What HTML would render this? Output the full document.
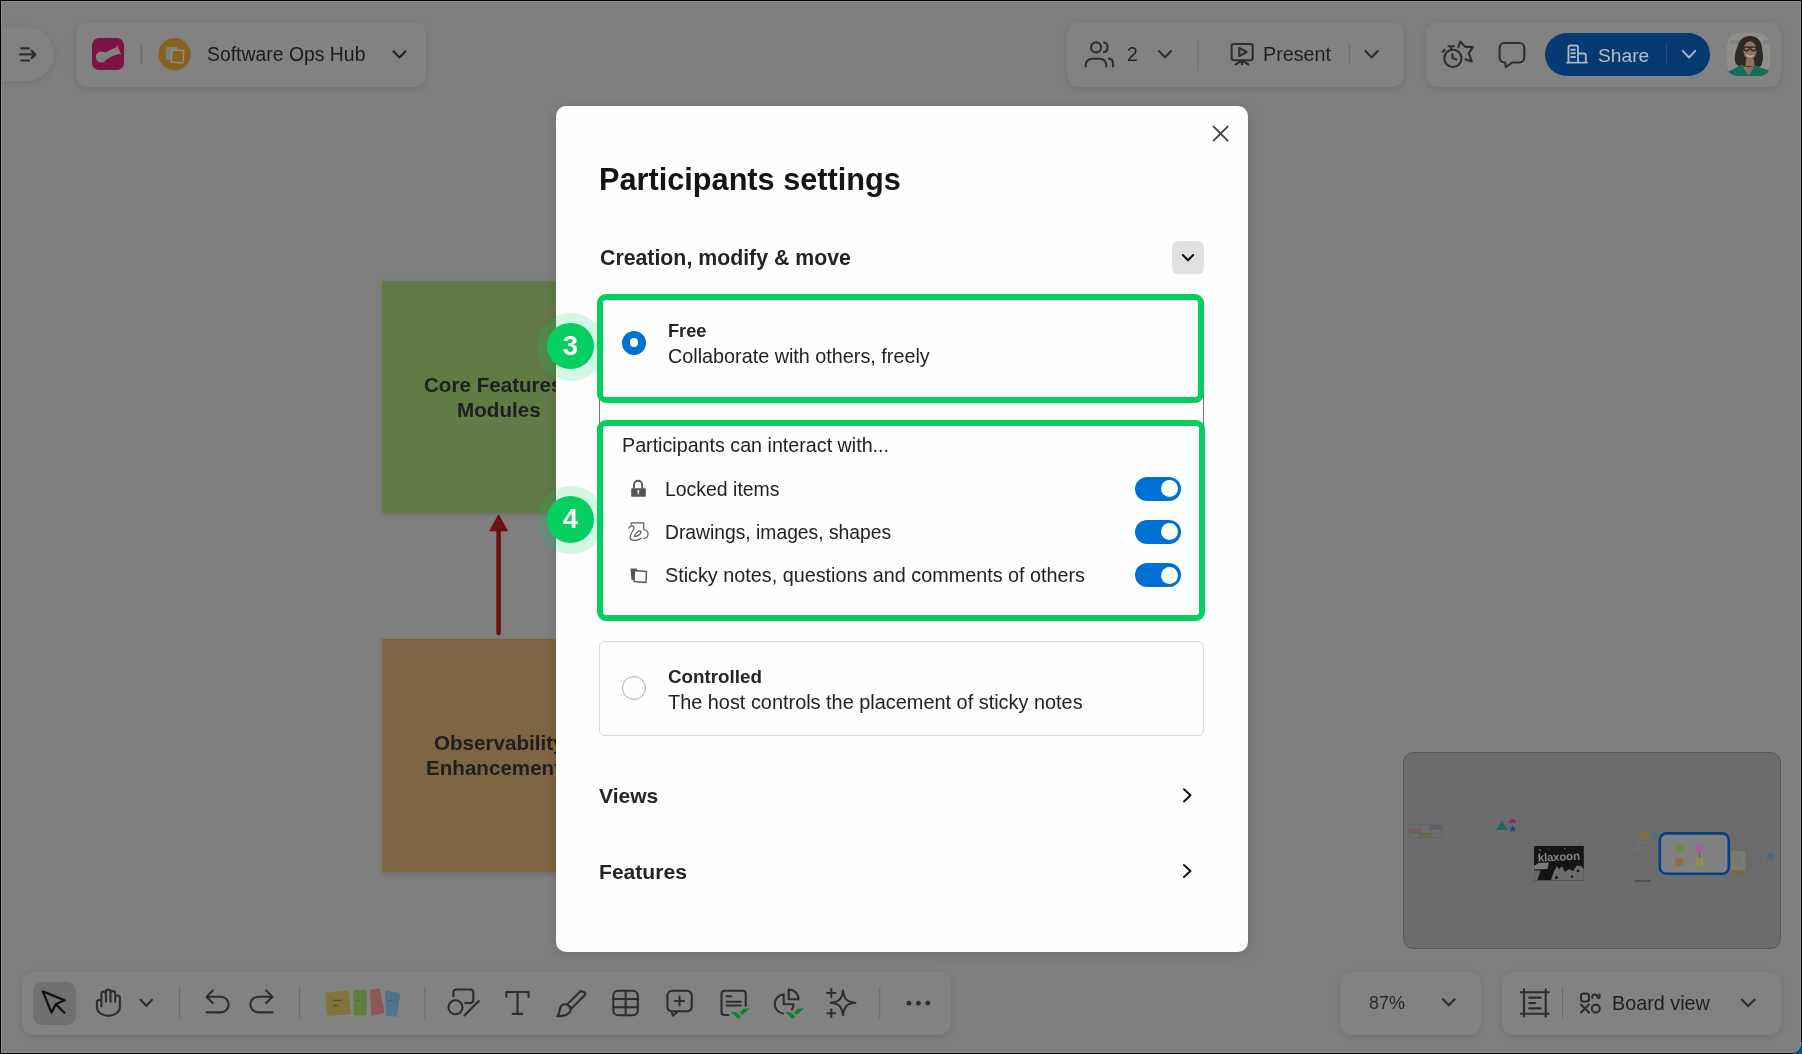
<!DOCTYPE html>
<html><head><meta charset="utf-8">
<style>
*{box-sizing:border-box;margin:0;padding:0}
html,body{width:1802px;height:1054px;overflow:hidden;background:#000}
body{font-family:"Liberation Sans",sans-serif;position:relative;color:#1b1b1b}
.a{position:absolute}
#win{position:absolute;left:1px;top:1px;width:1800px;height:1052px;background:#7f7f7f;border-bottom-right-radius:9px;box-shadow:inset 0 0 0 1px #8c8c8c}
.bar{position:absolute;background:#828282;border-radius:12px;box-shadow:0 1.5px 6px rgba(0,0,0,.11)}
.t{position:absolute;white-space:nowrap;line-height:1;will-change:transform}
svg{position:absolute;overflow:visible;left:0;top:0;will-change:transform}
.ic{fill:none;stroke:#2e2e2e;stroke-width:2.1;stroke-linecap:round;stroke-linejoin:round}
</style></head><body>
<div class="a" style="left:1793px;top:1042px;width:9px;height:12px;background:#0b4f80"></div>
<div id="win"></div>

<!-- BOARD NOTES -->
<div class="a" style="left:382.4px;top:281px;width:233px;height:232px;background:#627a46;box-shadow:0 2px 5px rgba(0,0,0,.13)"></div>
<div class="t" style="left:424.2px;top:375.2px;font-weight:700;font-size:20.6px;color:#1f1f1f">Core Features</div>
<div class="t" style="left:382px;top:400.2px;width:233.7px;text-align:center;font-weight:700;font-size:20.6px;color:#1f1f1f">Modules</div>
<div class="a" style="left:382.4px;top:639.3px;width:233px;height:232.5px;background:#7d6442;box-shadow:0 2px 5px rgba(0,0,0,.14)"></div>
<div class="t" style="left:433.6px;top:732.9px;font-weight:700;font-size:20.6px;color:#1f1f1f">Observability</div>
<div class="t" style="left:425.8px;top:757.6px;font-weight:700;font-size:20.6px;color:#1f1f1f">Enhancement</div>
<svg width="1802" height="1054">
  <line x1="498.6" y1="528" x2="498.6" y2="633" stroke="#6e0f14" stroke-width="4.5" stroke-linecap="round"/>
  <path d="M498.6 515.5 L507 530.5 L490.2 530.5 Z" fill="#6e0f14" stroke="#6e0f14" stroke-width="1.5" stroke-linejoin="round"/>
</svg>

<!-- TOP LEFT -->
<div class="bar" style="left:1px;top:27px;width:53px;height:54px;border-radius:0 27px 27px 0"></div>
<svg width="1802" height="1054">
  <g class="ic" style="stroke-width:2.2">
    <path d="M21.2 48.3 H29 M21.2 60.5 H29 M20.3 54.4 H35 M31.6 50.7 L35.3 54.4 L31.6 58.1"/>
  </g>
</svg>
<div class="bar" style="left:76px;top:22px;width:350px;height:65px"></div>
<div class="a" style="left:92px;top:38px;width:32px;height:32px;background:#7c1343;border-radius:7px"></div>
<svg width="1802" height="1054">
  <circle cx="101.3" cy="57" r="5.5" fill="#808080"/>
  <path d="M102 53 L106.5 52.2 L108 51 L116.5 47.2 L117.2 45 L121.3 54.8 L118.8 53.8 L109.5 57.5 L108.5 58.8 L104 60.5 Z" fill="#808080"/>
  <line x1="141.3" y1="43.5" x2="141.3" y2="65" stroke="#666" stroke-width="1"/>
  <circle cx="174.6" cy="54.1" r="16.2" fill="#86621d"/>
  <path d="M165.3 47.6 L177.5 46.5 L178.2 60 L166.4 59.8 Z" fill="#808080"/>
  <path d="M172.1 50 L183.9 50.5 L183 63 L171.2 62 Z" fill="#86621d" stroke="#8f8f8f" stroke-width="1.4"/>
  <path class="ic" d="M393.5 51.3 L399.5 57.5 L405.5 51.3" style="stroke:#222;stroke-width:2"/>
</svg>
<div class="t" style="left:206.8px;top:45px;font-size:19.4px;color:#1a1a1a">Software Ops Hub</div>

<!-- TOP RIGHT 1 -->
<div class="bar" style="left:1067px;top:22px;width:337px;height:65px"></div>
<svg width="1802" height="1054">
  <g class="ic">
    <circle cx="1096.1" cy="47.4" r="5"/>
    <path d="M1085.7 66.5 V65 A6.3 6.3 0 0 1 1092 58.7 H1100 A6.3 6.3 0 0 1 1106.3 65 V66.5"/>
    <path d="M1104 42.6 A5 5 0 0 1 1104 52.2"/>
    <path d="M1109 58.6 A4.8 4.8 0 0 1 1113 63.3 V66.5"/>
    <path d="M1159 51 L1165 57.4 L1171 51"/>
    <rect x="1231.6" y="44" width="21.1" height="16.3" rx="2.2"/>
    <path d="M1239.3 47.9 L1246.6 52 L1239.3 56.1 Z"/>
    <path d="M1242 60.5 V64.5 M1242 60.5 L1235.6 64.5 M1242 60.5 L1248.4 64.5"/>
    <path d="M1365.5 51 L1371.6 57.4 L1377.8 51"/>
  </g>
  <line x1="1197.8" y1="38.3" x2="1197.8" y2="70.3" stroke="#6c6c6c" stroke-width="1"/>
  <line x1="1349.4" y1="43.7" x2="1349.4" y2="65" stroke="#6c6c6c" stroke-width="1"/>
</svg>
<div class="t" style="left:1127px;top:45.3px;font-size:19.3px;color:#1f1f1f">2</div>
<div class="t" style="left:1262.8px;top:45px;font-size:19.7px;color:#1f1f1f">Present</div>

<!-- TOP RIGHT 2 -->
<div class="bar" style="left:1426px;top:22px;width:355px;height:65px"></div>
<div class="a" style="left:1545px;top:33px;width:165px;height:43px;background:#073a72;border-radius:22px"></div>
<svg width="1802" height="1054">
  <g class="ic">
    <circle cx="1452.9" cy="58.4" r="8.6"/>
    <path d="M1448.5 46.2 H1454 M1451.2 46.2 V49.5 M1442.6 52 L1444.8 49.7 M1452.4 54.2 V58 L1456.4 59.4"/>
    <path d="M1458.4 47.2 L1460.2 41.5 L1465.2 46.9 L1472.8 46.9 L1468.8 53.3 L1471.9 61.5 L1465.4 59.3"/>
    <path d="M1512 62.5 H1519.3 A5 5 0 0 0 1524.3 57.5 V48 A5 5 0 0 0 1519.3 43 H1504.6 A5 5 0 0 0 1499.6 48 V57.5 A5 5 0 0 0 1504.6 62.5 H1505.2 L1505.9 67 L1512 62.5"/>
  </g>
  <g class="ic" style="stroke:#a8b4c2;stroke-width:1.9">
    <path d="M1567 62.6 H1587 M1568.5 62.6 V47.5 A2 2 0 0 1 1570.5 45.5 H1576 A2 2 0 0 1 1578 47.5 V62.6 M1578 53.5 H1583.8 A2 2 0 0 1 1585.8 55.5 V62.6 M1571.3 49.8 H1575 M1571.3 53.3 H1575 M1571.3 57 H1575"/>
    <path d="M1682.8 50.8 L1689 57.5 L1695.2 50.8"/>
  </g>
  <line x1="1666.4" y1="44.2" x2="1666.4" y2="64.8" stroke="#2b5582" stroke-width="1"/>
</svg>
<div class="t" style="left:1598px;top:45.8px;font-size:19.2px;color:#b4bcc6">Share</div>
<!-- avatar -->
<div class="a" style="left:1727px;top:33px;width:43px;height:43px;border-radius:10px;overflow:hidden;background:#8d8d8b;box-shadow:inset 0 0 0 1px #555">
  <svg width="43" height="43">
    <rect x="0" y="0" width="43" height="43" fill="#8e8e8b"/>
    <rect x="3" y="7" width="40" height="4" fill="#86837c"/>
    <rect x="30" y="4" width="6" height="36" fill="#959593"/>
    <path d="M9 31 C6 25 9 17 11 12 C13 5 19 2.5 24 3 C31 3.5 35 9 35 15 C36 21 37 27 34 33 C30 36 14 36 9 31 Z" fill="#2d2926"/>
    <ellipse cx="23" cy="17.5" rx="6.6" ry="9.3" fill="#8e7365"/>
    <path d="M16.5 14.8 C18 13.5 21.5 13.8 23 14.5 C25 13.8 28 13.8 29.7 14.8 M16.8 15 C16.8 18.5 21.5 18.5 22.5 15.5 M23.5 15.5 C24.5 18.5 29.5 18.5 29.5 15" stroke="#2a2420" stroke-width="1.4" fill="none"/>
    <path d="M19.5 22 C21 23.8 24.5 24 26.5 22" stroke="#b8b0aa" stroke-width="1.5" fill="none"/>
    <path d="M19 26 H27 L27.5 33 H18.5 Z" fill="#8a7062"/>
    <path d="M0 43 V39 C4 37 9 35.5 14.5 31 L21.5 42.5 L28.2 32 C33 35 38 36 42 37.5 V43 Z" fill="#136d58"/>
    <path d="M14.5 31 L21.5 42.5 L28.2 32 C26 33.5 23 34 21 34 C18 34 16 33 14.5 31 Z" fill="#8a7062"/>
  </svg>
</div>

<!-- MINIMAP -->
<div class="a" style="left:1403px;top:752px;width:378px;height:197px;background:#6b6b6b;border:1px solid #585858;border-radius:10px"></div>
<svg width="1802" height="1054">
  <rect x="1409.2" y="825" width="32.3" height="12.5" fill="#6e6e6e"/>
  <rect x="1409.5" y="829.3" width="10.5" height="4" fill="#7b5b5b"/>
  <rect x="1420" y="833.3" width="10.7" height="4" fill="#5b6e48"/>
  <rect x="1430.7" y="825" width="10.8" height="4" fill="#5e5b72"/>
  <g stroke="#595959" stroke-width="0.5" fill="none">
    <rect x="1409.2" y="825" width="32.3" height="12.5"/>
    <path d="M1409.2 829.2 H1441.5 M1409.2 833.3 H1441.5 M1420 825 V837.5 M1430.7 825 V837.5"/>
  </g>
  <path d="M1496 830 L1502 820.7 L1508 830 Z" fill="#1d6a61"/>
  <path d="M1508.8 822.8 C1508.5 820.5 1510 819.8 1511 820 C1511.5 818 1514 818 1514.5 819.8 C1516 819.8 1516.5 821.5 1516 822.8 Z" fill="#8a2c5d"/>
  <path d="M1512.8 825.2 l1.1 2.3 2.5 .3 -1.85 1.75 .5 2.5 -2.25 -1.25 -2.25 1.25 .5 -2.5 -1.85 -1.75 2.5 -.3z" fill="#125283"/>
  <rect x="1534.1" y="846" width="49.7" height="34.3" fill="#141414"/>
  <text x="1558.8" y="860.8" font-family="Liberation Sans" font-size="11.5" font-weight="700" fill="#858585" text-anchor="middle" transform="rotate(-3 1558 857)" letter-spacing="-.2">klaxoon</text>
  <path d="M1538.5 863.1 L1549 862.6 L1547.5 869 L1534.1 869.5 L1534.1 866 Z" fill="#7a7a7a"/>
  <path d="M1534.1 870.5 L1540.5 870.5 L1537.2 880.3 L1534.1 880.3 Z" fill="#6b6b6b"/>
  <path d="M1551 880.3 L1554 871 L1557 866 L1559 869 L1562 866 L1565 872 L1569 869 L1573 871 L1577 865.5 L1581 866 L1583.8 869 L1583.8 880.3 Z" fill="#6d6d6d"/>
  <circle cx="1556.5" cy="877.5" r="1.5" fill="#141414"/><circle cx="1572" cy="876.5" r="1.2" fill="#141414"/><circle cx="1578" cy="871" r="1.3" fill="#141414"/>
  <path d="M1539 849 l2 2 M1548 848.5 l1 1 M1564 848 l1.5 1" stroke="#7a7a7a" stroke-width="1"/>
  <g fill="none" stroke="#76768c" stroke-width="0.4">
    <rect x="1628.5" y="831.5" width="8.8" height="8"/>
    <rect x="1628.5" y="842.2" width="8.8" height="8.2"/>
    <rect x="1638.5" y="842.2" width="8.5" height="8.2" stroke="#6a8090"/>
  </g>
  <rect x="1640" y="832" width="8.2" height="8" fill="#7b7338"/>
  <rect x="1651" y="832" width="7" height="7" fill="#4f6f7d"/>
  <rect x="1635.3" y="880" width="15.5" height="1.9" fill="#505050"/>
  <rect x="1659.8" y="833.4" width="69" height="40.4" rx="6.5" fill="#818181" stroke="#073f86" stroke-width="2.6"/>
  <path d="M1683.5 848.4 H1695.3" stroke="#6a9a5a" stroke-width=".5"/>
  <path d="M1679.3 852.7 V858" stroke="#9a7070" stroke-width=".5"/>
  <path d="M1699.5 852.7 V858" stroke="#3a3a3a" stroke-width=".6"/>
  <path d="M1683.5 862.3 H1695.3" stroke="#9a6a6a" stroke-width=".5"/>
  <rect x="1675" y="844.2" width="8.4" height="8.5" fill="#6a8b4a"/>
  <rect x="1695.2" y="844.2" width="8.4" height="8.5" fill="#9a679a"/>
  <rect x="1675" y="858" width="8.4" height="8.5" fill="#8f7048"/>
  <rect x="1695.2" y="858" width="8.4" height="8.5" fill="#958c48"/>
  <rect x="1731.5" y="851.3" width="13.7" height="19.5" fill="#7c7c78" stroke="#85773e" stroke-width=".5"/>
  <rect x="1731.5" y="870.5" width="13.7" height="4.2" fill="#766c3a"/>
  <path d="M1733.8 854 h8.5 M1733.8 856 h8.5 M1733.8 858 h8.5 M1733.8 860 h8.5 M1733.8 862 h8.5 M1733.8 864 h8.5 M1733.8 866 h8.5" stroke="#5e5e5e" stroke-width=".35"/>
  <rect x="1767" y="853" width="7" height="7.2" fill="#55667a"/>
</svg>

<!-- BOTTOM TOOLBAR -->
<div class="bar" style="left:22px;top:972px;width:929px;height:63px"></div>
<div class="bar" style="left:1340px;top:972px;width:141px;height:63px"></div>
<div class="bar" style="left:1502px;top:972px;width:279px;height:63px"></div>
<div class="a" style="left:33px;top:981.5px;width:43px;height:43px;background:#707070;border-radius:9px"></div>
<svg width="1802" height="1054">
  <g class="ic" style="stroke:#111;stroke-width:2.3">
    <path d="M42.8 991.4 L64.5 1000.3 L55.8 1004.2 L51.5 1012.6 Z M55.8 1004.2 L64.3 1012.8"/>
  </g>
  <g class="ic">
    <path d="M101.4 1006.4 V993.9 A2.25 2.25 0 0 1 105.9 993.9 V1001.7 M105.9 993.9 V991.9 A2.3 2.3 0 0 1 110.5 991.9 V1001.7 M110.5 993.5 A2.35 2.35 0 0 1 115.2 993.5 V1001.7 M115.2 997.9 A2.35 2.35 0 0 1 119.9 997.9 V1007 A11.5 8.9 0 0 1 96.9 1007 V1002.3 A2.25 2.25 0 0 1 101.4 1002.3"/>
    <path d="M140.5 999.8 L146.3 1005.8 L152 999.8"/>
    <path d="M206.5 996.7 H220.8 A7.85 7.85 0 0 1 220.8 1012.4 H206.5 M212.8 990.6 L206.5 996.7 L212.8 1002.9"/>
    <path d="M272.5 996.7 H258.2 A7.85 7.85 0 0 0 258.2 1012.4 H272.5 M266.2 990.6 L272.5 996.7 L266.2 1002.9"/>
    <path d="M453.4 996.5 V992.5 A3 3 0 0 1 456.4 989.5 H470.3 A3 3 0 0 1 473.3 992.5 V1000 A3 3 0 0 1 470.3 1003 H465.2"/>
    <circle cx="455.5" cy="1007.2" r="7"/>
    <path d="M478.8 1001 L464.4 1015.5"/>
    <path d="M506.4 997 V992 H528.6 V997 M517.5 992 V1013.9 M512.6 1013.9 H522.3"/>
    <path d="M582.8 991.8 A2.5 2.5 0 0 1 585.4 994.5 L571.5 1008.5 L567.3 1004.3 L581 990.8 Z M569.5 1006.2 C566 1003 561 1004 560 1008.5 C559.5 1012 559 1014.5 557.3 1016.3 C562 1016.3 566 1016 569 1013 C571 1011 571 1008.5 569.5 1006.2 Z"/>
    <rect x="613.3" y="990.8" width="24.5" height="24.5" rx="5"/>
    <path d="M625.6 990.8 V1015.3 M613.3 999 H637.8 M613.3 1007.2 H637.8"/>
    <path d="M672.5 1011.3 H687 A4.8 4.8 0 0 0 691.8 1006.5 V995.6 A4.8 4.8 0 0 0 687 990.8 H672.2 A4.8 4.8 0 0 0 667.4 995.6 V1006.5 A4.8 4.8 0 0 0 671.5 1011.2 L673 1015.7 L678.2 1011.3 M679.5 996.5 V1005.5 M675 1001 H684"/>
    <path d="M728.5 1015 H724.5 A3 3 0 0 1 721.5 1012 V993.75 A3 3 0 0 1 724.5 990.75 H742.75 A3 3 0 0 1 745.75 993.75 V1005.75 M726.5 996.25 H731.25 M726.5 1001.75 H740.75 M726.5 1005.5 H740.75"/>
    <path d="M783 1013.5 A9.7 9.7 0 0 1 783.7 994.25 V1004.25 H793.5 A9.7 9.7 0 0 1 792 1009.5 M788.7 989.5 V999.25 H798.5 A9.75 9.75 0 0 0 788.7 989.5 Z"/>
    <path d="M843 990.6 C844 998 846 1002 855.4 1002.8 C846 1003.6 844 1007.6 843 1015.2 C842 1007.6 840 1003.6 830.6 1002.8 C840 1002 842 998 843 990.6 Z M831.3 989 V997 M827.3 993 H835.3 M831.3 1009.3 V1017.3 M827.3 1013.3 H835.3"/>
    <path d="M1443 999.2 L1448.8 1005.3 L1454.6 999.2"/>
    <path d="M1524 989.2 V1016.6 M1545.7 989.2 V1016.6 M1521 992.2 H1548.8 M1521 1013.8 H1548.8 M1529.2 997.6 H1540.8 M1529.2 1003.1 H1535.3 M1529.2 1008.4 H1540.8"/>
    <rect x="1581" y="993.5" width="8" height="8" rx="2.5"/>
    <path d="M1592.5 998 C1591.5 996 1593.5 993.8 1595.5 994.5 C1597.5 995.3 1597 997.3 1598 998 C1599.5 998.8 1600.2 996.5 1599.2 994.5" />
    <path d="M1581 1004.5 L1589 1012.6 M1589 1004.5 L1581 1012.6"/>
    <circle cx="1595.8" cy="1008.6" r="4"/>
    <path d="M1741.8 999.8 L1748.2 1006 L1754.6 999.8"/>
  </g>
  <g fill="#12802a">
    <path d="M731 1012.3 L736 1012.3 L741 1016.3 L738.3 1019 Z M739.8 1012.8 L743.5 1008.8 L750 1008.3 L742.3 1015 Z"/>
    <path d="M785.2 1012.3 L790.2 1012.3 L795.2 1016.3 L792.5 1019 Z M794 1012.8 L797.7 1008.8 L804.2 1008.3 L796.5 1015 Z"/>
  </g>
  <circle cx="908.9" cy="1003.2" r="2.4" fill="#2e2e2e"/>
  <circle cx="918.4" cy="1003.2" r="2.4" fill="#2e2e2e"/>
  <circle cx="927.8" cy="1003.2" r="2.4" fill="#2e2e2e"/>
  <g stroke="#6c6c6c" stroke-width="1">
    <line x1="179.5" y1="987" x2="179.5" y2="1019"/>
    <line x1="299.5" y1="987" x2="299.5" y2="1019"/>
    <line x1="424.8" y1="987" x2="424.8" y2="1019"/>
    <line x1="879.8" y1="987" x2="879.8" y2="1019"/>
    <line x1="1562.5" y1="987.3" x2="1562.5" y2="1018.5"/>
  </g>
  <!-- stickies -->
  <g stroke="#848484" stroke-width="1.6" stroke-linejoin="round">
    <path d="M384.2 989.3 L398.5 992 Q401 992.5 400.8 995 L398 1015.5 Q397.6 1017.8 395.3 1017.5 L385.3 1016.2 Z" fill="#4d7590"/>
    <path d="M369 991 Q369 989 371 988.7 L378.5 987.8 Q380.6 987.6 381 989.7 L385.3 1012 Q385.7 1014 383.6 1014.4 L372.5 1016.5 Q370.6 1016.8 370.4 1014.8 Z" fill="#8a5a5a"/>
    <path d="M352.6 992 Q352.6 989.3 355.3 989.3 L365 989.3 Q367.6 989.3 367.6 992 L367.6 1013.5 Q367.6 1016.3 365 1016.3 L355.3 1016.3 Q352.6 1016.3 352.6 1013.5 Z" fill="#5f7f3f"/>
    <path d="M324.3 994.3 Q324 992 326.5 991.8 L347.3 989.6 Q349.6 989.4 349.8 991.7 L351.8 1012.8 Q352 1015.2 349.6 1015.3 L328.6 1016.5 Q326.2 1016.6 326 1014.3 Z" fill="#80743a"/>
  </g>
  <path d="M333 1000.3 h9 M333.3 1005.6 h5.5" stroke="#5a5228" stroke-width="1.3"/>
  <path d="M355.5 1000.3 h4.5 M375 1000 h4 M388.5 1000.5 h4" stroke="#4a4a30" stroke-width="1" opacity=".5"/>
</svg>

<div class="t" style="left:1368.5px;top:994px;font-size:18px;color:#2a2a2a">87%</div>
<div class="t" style="left:1611.5px;top:993.5px;font-size:19.8px;color:#1f1f1f">Board view</div>

<!-- MODAL -->
<div class="a" style="left:556px;top:106px;width:692px;height:846px;background:#fefefe;border-radius:10px;box-shadow:0 2px 14px rgba(0,0,0,.13)"></div>
<svg width="1802" height="1054">
  <path d="M1213.6 126.6 L1227.6 140.6 M1227.6 126.6 L1213.6 140.6" stroke="#444" stroke-width="1.9" stroke-linecap="round"/>
</svg>
<div class="t" style="left:599px;top:165.2px;font-size:30.7px;font-weight:700;color:#141414">Participants settings</div>
<div class="t" style="left:599.5px;top:247.6px;font-size:21.3px;font-weight:700;color:#242424">Creation, modify &amp; move</div>
<div class="a" style="left:1172px;top:241.3px;width:32px;height:32.3px;background:#e1e1e1;border-radius:6px"></div>
<svg width="1802" height="1054">
  <path d="M1182.8 255 L1188 260.3 L1193.2 255" fill="none" stroke="#111" stroke-width="2.1" stroke-linecap="round" stroke-linejoin="round"/>
</svg>

<!-- underlying selected option border -->
<div class="a" style="left:599px;top:296px;width:605px;height:323px;border:1.3px solid #777;border-radius:8px"></div>
<!-- controlled -->
<div class="a" style="left:599px;top:641px;width:605px;height:94.5px;border:1.8px solid #dadada;border-radius:6px"></div>
<div class="a" style="left:622.3px;top:676.3px;width:24px;height:24px;border:1.7px solid #ababab;border-radius:50%"></div>
<div class="t" style="left:668px;top:668px;font-size:18.8px;font-weight:700;color:#242424">Controlled</div>
<div class="t" style="left:668px;top:692.8px;font-size:19.9px;color:#222">The host controls the placement of sticky notes</div>

<div class="t" style="left:599px;top:785.3px;font-size:21px;font-weight:700;color:#242424">Views</div>
<div class="t" style="left:599px;top:861px;font-size:21.1px;font-weight:700;color:#242424">Features</div>
<svg width="1802" height="1054">
  <path d="M1184 789.3 L1190.5 795.3 L1184 801.4 M1184 865 L1190.5 871 L1184 877.1" fill="none" stroke="#111" stroke-width="2" stroke-linecap="round" stroke-linejoin="round"/>
</svg>

<!-- Free option -->
<div class="a" style="left:622.2px;top:330.6px;width:24px;height:24px;border-radius:50%;background:#0070d5"></div>
<div class="a" style="left:629.95px;top:338.35px;width:8.5px;height:8.5px;border-radius:50%;background:#fff"></div>
<div class="t" style="left:668px;top:321.8px;font-size:18.2px;font-weight:700;color:#242424">Free</div>
<div class="t" style="left:668px;top:346.5px;font-size:19.8px;color:#222">Collaborate with others, freely</div>

<!-- interact -->
<div class="t" style="left:622px;top:436.3px;font-size:19.7px;color:#222">Participants can interact with...</div>
<div class="t" style="left:664.8px;top:480.2px;font-size:19.45px;color:#222">Locked items</div>
<div class="t" style="left:664.8px;top:523.3px;font-size:19.3px;color:#222">Drawings, images, shapes</div>
<div class="t" style="left:664.8px;top:566.2px;font-size:19.8px;color:#222">Sticky notes, questions and comments of others</div>
<svg width="1802" height="1054">
  <path d="M634 488.5 V484.8 A4.1 4.1 0 0 1 642.2 484.8 V488.5" fill="none" stroke="#555" stroke-width="1.9"/>
  <rect x="631.2" y="488.2" width="14.6" height="8.6" rx=".8" fill="#555"/>
  <circle cx="638.3" cy="491.2" r="1.1" fill="#fff"/><rect x="637.8" y="491.2" width="1.1" height="3.2" fill="#fff"/>
  <g fill="none" stroke="#5f5f5f" stroke-width="1.25" stroke-linecap="round" stroke-linejoin="round">
    <path d="M631.3 524.3 V522.8 H643.7 V528.8"/>
    <path d="M628.8 528.1 C630.3 525.2 634.3 525.3 633.9 528.3 C633.5 531.5 629.6 534 630.1 537.6 C630.6 541.2 637.5 541 641.2 538.2"/>
    <path d="M634.4 536.5 C635.5 532.5 639.8 529.6 640.8 531.6 C641.8 533.8 637.5 536.5 634.4 536.5"/>
    <path d="M643.8 529.6 A4.4 4.4 0 0 1 643.6 538.4"/>
  </g>
  <path d="M630.5 568.5 H637 V580 H631.5 Z" fill="#555"/>
  <path d="M634.5 570.5 L646.5 571.5 L646 582.5 L634 581.5 Z" fill="#fff" stroke="#555" stroke-width="1.4" stroke-linejoin="round"/>
</svg>
<!-- toggles -->
<div class="a" style="left:1135px;top:476.5px;width:46px;height:24px;border-radius:12px;background:#0070d5"></div>
<div class="a" style="left:1160.8px;top:480px;width:17px;height:17px;border-radius:50%;background:#fff"></div>
<div class="a" style="left:1135px;top:519.8px;width:46px;height:24px;border-radius:12px;background:#0070d5"></div>
<div class="a" style="left:1160.8px;top:523.3px;width:17px;height:17px;border-radius:50%;background:#fff"></div>
<div class="a" style="left:1135px;top:563px;width:46px;height:24px;border-radius:12px;background:#0070d5"></div>
<div class="a" style="left:1160.8px;top:566.5px;width:17px;height:17px;border-radius:50%;background:#fff"></div>

<!-- ANNOTATIONS -->
<div class="a" style="left:556px;top:403px;width:648px;height:17px;background:transparent"></div>
<div class="a" style="left:597px;top:294px;width:607px;height:109px;border:6px solid #06cf62;border-radius:9px"></div>
<div class="a" style="left:597px;top:420px;width:608px;height:201px;border:6px solid #06cf62;border-radius:9px"></div>
<div class="a" style="left:537px;top:313px;width:68px;height:68px;border-radius:50%;background:rgba(6,207,98,.17)"></div>
<div class="a" style="left:547.3px;top:322.9px;width:46.6px;height:46.6px;border-radius:50%;background:#06cf62"></div>
<div class="t" style="left:547.3px;top:332px;width:46.6px;text-align:center;font-size:27.5px;font-weight:700;color:#fff">3</div>
<div class="a" style="left:537px;top:486px;width:68px;height:68px;border-radius:50%;background:rgba(6,207,98,.17)"></div>
<div class="a" style="left:547.3px;top:496.2px;width:46.6px;height:46.6px;border-radius:50%;background:#06cf62"></div>
<div class="t" style="left:547.3px;top:505.2px;width:46.6px;text-align:center;font-size:27.5px;font-weight:700;color:#fff">4</div>
</body></html>
